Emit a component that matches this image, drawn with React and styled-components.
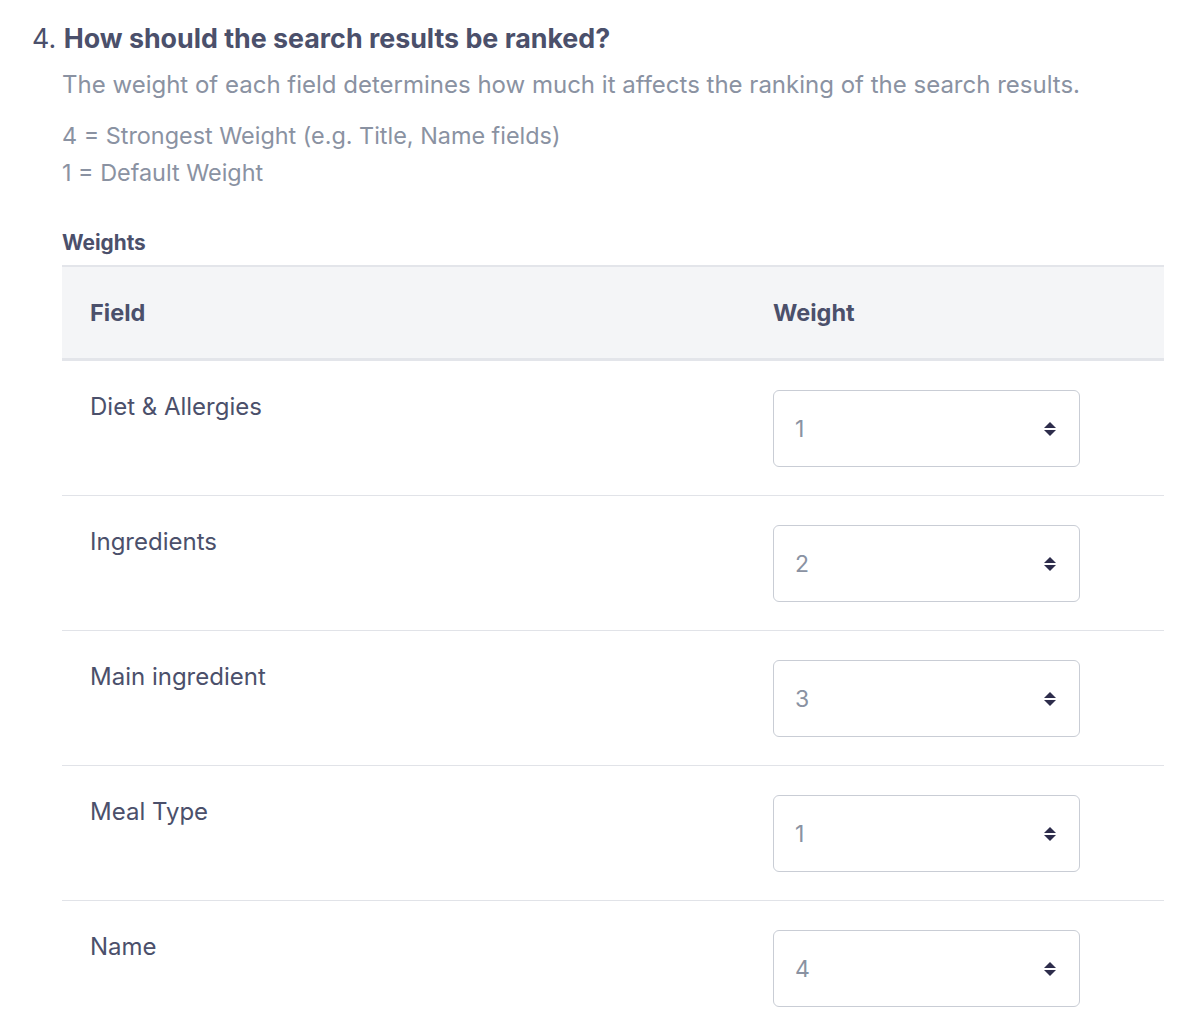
import React from 'react';
import styled, { createGlobalStyle } from 'styled-components';

const GlobalStyle = createGlobalStyle`
  body {
    margin: 0;
    background: #ffffff;
    font-family: Inter, "Noto Sans", sans-serif;
  }
`;

const Page = styled.div`
  padding: 20px 36px 0 32px;
`;

const Title = styled.h2`
  margin: 0;
  font-size: 26.8px;
  line-height: 36px;
  font-weight: 700;
  color: #4b506b;
`;

const Num = styled.span`
  font-weight: 400;
`;

const Body = styled.div`
  padding-left: 30px;
`;

const Lead = styled.p`
  margin: 11px 0 0;
  font-size: 24px;
  line-height: 36px;
  color: #8a92a2;
`;

const Scale = styled.div`
  margin-top: 14px;
  font-size: 23.4px;
  line-height: 37px;
  color: #8a92a2;
`;

const SectionLabel = styled.div`
  margin-top: 38px;
  font-size: 20.8px;
  line-height: 28px;
  font-weight: 700;
  color: #4b506b;
`;

const Table = styled.div`
  margin-top: 8px;
  border-top: 2px solid #e3e5ea;
`;

const Row = styled.div`
  display: grid;
  grid-template-columns: 711px 1fr;
  box-sizing: border-box;
  height: ${p => (p.$head ? 94 : 135)}px;
  align-items: ${p => (p.$head ? 'center' : 'start')};
  background: ${p => (p.$head ? '#f4f5f7' : 'transparent')};
  border-bottom: ${p => (p.$head ? '3px solid #e3e5ea' : '1px solid #e1e3e8')};
  padding: ${p => (p.$head ? '0' : '29px 0')};
`;

const HeadCell = styled.div`
  padding-left: ${p => (p.$first ? 28 : 0)}px;
  font-size: 23.5px;
  font-weight: 700;
  color: #4b506b;
`;

const Label = styled.div`
  padding: 2px 0 0 28px;
  font-size: 24px;
  line-height: 30px;
  color: #4b506b;
`;

const Select = styled.div`
  box-sizing: border-box;
  width: 307px;
  height: 77px;
  border: 1px solid #c9cdd5;
  border-radius: 6px;
  display: flex;
  align-items: center;
  justify-content: space-between;
  padding: 0 22px 0 21px;
  font-size: 23px;
  color: #8a92a2;
`;

const Arrows = () => (
  <svg width="14" height="18" viewBox="0 0 14 18">
    <path d="M7 2 L13 8 H1 Z" fill="#2d2c4b" />
    <path d="M1 10 H13 L7 16 Z" fill="#2d2c4b" />
  </svg>
);

const rows = [
  ['Diet & Allergies', 1],
  ['Ingredients', 2],
  ['Main ingredient', 3],
  ['Meal Type', 1],
  ['Name', 4],
];

const App = () => (
  <>
    <GlobalStyle />
    <Page>
      <Title>
        <Num>4. </Num>How should the search results be ranked?
      </Title>
      <Body>
        <Lead>
          The weight of each field determines how much it affects the ranking of the search results.
        </Lead>
        <Scale>
          4 = Strongest Weight (e.g. Title, Name fields)
          <br />1 = Default Weight
        </Scale>
        <SectionLabel>Weights</SectionLabel>
        <Table>
          <Row $head>
            <HeadCell $first>Field</HeadCell>
            <HeadCell>Weight</HeadCell>
          </Row>
          {rows.map(([name, w]) => (
            <Row key={name}>
              <Label>{name}</Label>
              <Select>
                <span>{w}</span>
                <Arrows />
              </Select>
            </Row>
          ))}
        </Table>
      </Body>
    </Page>
  </>
);

export default App;
